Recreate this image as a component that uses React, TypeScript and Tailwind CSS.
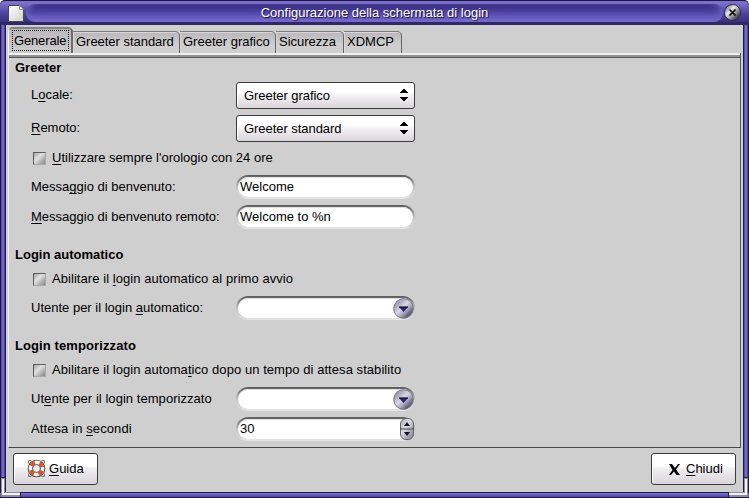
import React from "react";

/* A label whose mnemonic letter is wrapped in underscores: "L_o_cale:" */
function Label({ text, className = "" }: { text: string; className?: string }) {
  const [before, key, after] = text.split("_");
  return (
    <span className={"whitespace-pre " + className}>
      {before}
      {key && <span className="underline decoration-1 underline-offset-2 [text-decoration-skip-ink:none]">{key}</span>}
      {after}
    </span>
  );
}

function Tab({ text, width, tracking = "" }: { text: string; width: string; tracking?: string }) {
  return (
    <div
      className={
        "flex h-[22px] rounded-tr-[5px] border-t border-r border-[#7b7b7b] border-r-[#636363] bg-linear-to-b from-[#b9b7b9] to-[#cfcfcf] to-60% pt-[2px] pl-[3px] shadow-[inset_1px_1px_0_#d9d7d9] " +
        width
      }
    >
      <Label text={text} className={tracking} />
    </div>
  );
}

function Heading({ text, className = "" }: { text: string; className?: string }) {
  return (
    <h2 className={"flex h-5 items-center pl-[6px] font-bold " + className}>
      <Label text={text} />
    </h2>
  );
}

function Row({ label, tracking = "", height = "h-[30px]", children }: { label: string; tracking?: string; height?: string; children: React.ReactNode }) {
  return (
    <div className={"flex items-center pl-[22px] " + height}>
      <div className="w-[205px] shrink-0 pb-px">
        <Label text={label} className={tracking} />
      </div>
      {children}
    </div>
  );
}

function Check({ label, tracking = "" }: { label: string; tracking?: string }) {
  return (
    <div className="flex h-7 items-center gap-[6px] pl-6">
      <span className="mt-px h-[13px] w-[13px] border border-t-[#5c5c5c] border-r-[#a8a8a8] border-b-[#a8a8a8] border-l-[#5c5c5c] bg-linear-to-br from-[#a4a4a4] via-[#e2e2e2] via-40% to-[#858585]" />
      <Label text={label} className={tracking} />
    </div>
  );
}

function Select({ value }: { value: string }) {
  return (
    <div className="flex h-[27px] w-[179px] items-center justify-between rounded-[3px] border border-[#3c3c3c] bg-linear-to-b from-white from-35% via-[#f0eef0] via-55% to-[#d8d6d8] pt-px pr-[6px] pl-[7px] shadow-[inset_1px_1px_0_#fff]">
      <Label text={value} className="tracking-[-0.05px]" />
      <svg width="8" height="12" viewBox="0 0 8 12" shapeRendering="crispEdges" className="-mt-px">
        <path d="M3 0h2v1h1v1h1v1h1v1H0V3h1V2h1V1h1zM0 8h8v1H7v1H6v1H5v1H3v-1H2v-1H1V9H0z" />
      </svg>
    </div>
  );
}

/* Sunken pill: dark upper rim fading to a light lower rim */
function Entry({ value = "", children }: { value?: string; children?: React.ReactNode }) {
  return (
    <div className="h-6 w-[179px] rounded-full bg-linear-to-b from-[#5a5a5a] via-[#c4c4c4] via-50% to-[#e6e6e6] pt-[2px] pr-[2px] pb-[2px] pl-[2px]">
      <div className="flex h-5 items-center justify-between rounded-full bg-white pl-[2px] shadow-[inset_0_1px_0_#e0e0e0]">
        <Label text={value} />
        {children}
      </div>
    </div>
  );
}

function DropKnob() {
  return (
    <svg width="21" height="21" viewBox="0 0 21 21" className="-mr-px shrink-0">
      <defs>
        <linearGradient id="knob" x1="0" y1="0" x2="1" y2="1">
          <stop offset="0" stopColor="#747384" />
          <stop offset=".45" stopColor="#d8d7e6" />
          <stop offset=".62" stopColor="#a9a8bd" />
          <stop offset=".8" stopColor="#5c5b70" />
          <stop offset="1" stopColor="#bbbacb" />
        </linearGradient>
      </defs>
      <circle cx="10.5" cy="10.5" r="9.8" fill="url(#knob)" stroke="#777685" strokeWidth="1" />
      <path d="M6 9h9l-4.5 5z" fill="#292080" />
      <path d="M6 9h9" stroke="#111" strokeWidth="1.2" />
    </svg>
  );
}

function SpinKnob() {
  return (
    <svg width="14" height="22" viewBox="0 0 14 22" className="-mr-px shrink-0">
      <defs>
        <linearGradient id="spin" x1="0" y1="0" x2="1" y2="1">
          <stop offset="0" stopColor="#aaaab4" />
          <stop offset=".4" stopColor="#dcdce4" />
          <stop offset="1" stopColor="#77778a" />
        </linearGradient>
      </defs>
      <rect x=".5" y=".5" width="13" height="21" rx="5.500" fill="url(#spin)" stroke="#666670" />
      <path d="M0 11h14" stroke="#444" />
      <path d="M4 8h6L7 4zM4 14h6l-3 4z" fill="#111" />
    </svg>
  );
}

function LifeRing() {
  return (
    <svg width="19" height="19" viewBox="0 0 19 19" className="-mt-px">
      <path d="M1.500 4.500v-3h3M14.500 1.500h3v3M17.500 14.500v3h-3M4.500 17.500h-3v-3" fill="none" stroke="#77767c" />
      <circle cx="9.500" cy="9.500" r="8.800" fill="#3a373e" />
      <circle cx="9.500" cy="9.500" r="6" fill="none" stroke="#faf7f4" strokeWidth="3.800" />
      <circle cx="9.500" cy="9.500" r="6" fill="none" stroke="#e8501f" strokeWidth="3.800" strokeDasharray="4.712 4.712" strokeDashoffset="-2.356" />
      <circle cx="9.500" cy="9.500" r="3.900" fill="#efedf2" stroke="#4a4448" strokeWidth=".8" />
    </svg>
  );
}

function PushButton({ label, icon, className }: { label: string; icon: React.ReactNode; className: string }) {
  return (
    <button
      className={
        "flex h-8 w-[85px] items-center rounded-[3px] border border-[#3c3c3c] bg-linear-to-b from-white from-40% via-[#efedf0] via-50% to-[#d8d6d8] shadow-[inset_1px_1px_0_#fff] " +
        className
      }
    >
      {icon}
      <Label text={label} />
    </button>
  );
}

export default function App() {
  return (
    <div className="relative flex h-[498px] w-[749px] flex-col overflow-hidden rounded-t-[5px] bg-[#211a48] font-['Liberation_Sans',Arial,sans-serif] text-[13px] leading-[16px] text-black">
      <header className="flex h-[25px] items-center rounded-t-[5px] border-t border-b-[3px] border-t-[#1d1645] border-b-[#302765] bg-linear-to-b from-[#7b70ca] from-10% via-[#4c42a0] via-60% to-[#39307d] pl-2">
        <svg width="16" height="17" viewBox="0 0 16 17" className="mt-[3px] shrink-0">
          <defs>
            <linearGradient id="doc" x1="0" y1="0" x2="1" y2="1">
              <stop offset="0" stopColor="#fff" />
              <stop offset="1" stopColor="#cfcfcb" />
            </linearGradient>
          </defs>
          <path d="M.5.500h11l4 4v12H.5z" fill="url(#doc)" stroke="#48464e" />
          <path d="M11.500.500v4h4" fill="#f8f8f8" stroke="#8b8990" />
        </svg>
        <div className="mt-[3px] ml-[2px] flex h-[18px] w-[697px] shrink-0 items-center justify-center rounded-full bg-linear-to-b from-[#332a78] via-[#4b409f] via-40% to-[#7a6fd2] shadow-[inset_6px_0_6px_-3px_#6b60bd,inset_-6px_0_6px_-3px_#6b60bd]">
          <Label text="Configurazione della schermata di login" className="text-white [text-shadow:1px_1px_1px_#151034]" />
        </div>
        <svg width="17" height="17" viewBox="0 0 17 17" className="mt-[2px] ml-[1px] shrink-0">
          <defs>
            <linearGradient id="close" x1="0" y1="0" x2="1" y2="1">
              <stop offset="0" stopColor="#4a4a50" />
              <stop offset=".38" stopColor="#e8e8ea" />
              <stop offset=".62" stopColor="#8d8d94" />
              <stop offset=".8" stopColor="#44444c" />
              <stop offset="1" stopColor="#aaa" />
            </linearGradient>
          </defs>
          <circle cx="8.500" cy="8.500" r="8" fill="url(#close)" stroke="#302c4c" />
          <path d="M5.500 5.500l6 6M11.500 5.500l-6 6" stroke="#080808" strokeWidth="1.700" />
        </svg>
      </header>

      <div className="flex h-[467px]">
        <div className="w-[6px] shrink-0 border-r border-l border-[#211a48] bg-linear-to-r from-[#5247a5] from-25% via-[#9a8fe8] via-50% to-[#4e429f] to-75%" />
        <main className="flex w-[737px] shrink-0 flex-col bg-[#cfcfcf] px-[2px] pt-[2px]">
          <nav className="flex h-[26px] items-end">
            <div className="h-[26px] w-[65px] rounded-t-[5px] border-t-2 border-r-2 border-l border-t-[#828282] border-r-[#6b6b6b] border-l-[#f4f4f4] bg-linear-to-b from-[#bbb9bb] to-[#cdcdcd] p-[1px]">
              <div className="ml-[2px] flex h-[21px] w-[57px] border border-dotted border-black pt-[2px] pl-px">
                <Label text="Generale" className="tracking-[-0.15px]" />
              </div>
            </div>
            <Tab text="Greeter standard" width="w-[107px]" tracking="tracking-[-0.03px]" />
            <Tab text="Greeter grafico" width="w-24" />
            <Tab text="Sicurezza" width="w-[68px]" />
            <Tab text="XDMCP" width="w-[58px]" />
          </nav>
          <section className="h-[395px] border-r border-b border-l border-r-[#555] border-b-[#484848] border-l-[#eee]">
            <div className="h-[5px] border-t-2 border-b border-t-[#f1eff1] border-b-[#555] bg-[#929292]" />
            <Heading text="Greeter" />
            <Row label="L_o_cale:" height="h-[34px]">
              <Select value="Greeter grafico" />
            </Row>
            <Row label="_R_emoto:" height="h-8">
              <Select value="Greeter standard" />
            </Row>
            <Check label="_U_tilizzare sempre l'orologio con 24 ore" />
            <Row label="Messa_g_gio di benvenuto:">
              <Entry value="Welcome" />
            </Row>
            <Row label="_M_essaggio di benvenuto remoto:">
              <Entry value="Welcome to %n" />
            </Row>
            <Heading text="Login automatico" className="mt-[13px]" />
            <Check label="Abilitare il _l_ogin automatico al primo avvio" tracking="tracking-[0.06px]" />
            <Row label="Utente per il login _a_utomatico:">
              <Entry>
                <DropKnob />
              </Entry>
            </Row>
            <Heading text="Login temporizzato" className="mt-[13px] tracking-[0.1px]" />
            <Check label="Abilitare il login automa_t_ico dopo un tempo di attesa stabilito" tracking="tracking-[0.06px]" />
            <Row label="Ut_e_nte per il login temporizzato" tracking="tracking-[0.05px]">
              <Entry>
                <DropKnob />
              </Entry>
            </Row>
            <Row label="Attesa in _s_econdi" tracking="tracking-[0.1px]">
              <Entry value="30">
                <SpinKnob />
              </Entry>
            </Row>
          </section>
          <footer className="flex justify-between px-[5px] pt-[5px]">
            <PushButton label="_G_uida" className="gap-[3px] pl-[13px]" icon={<LifeRing />} />
            <PushButton
              label="_C_hiudi"
              className="gap-[5px] pl-4"
              icon={
                <svg width="13" height="13" viewBox="0 0 13 13">
                  <path d="M1 1h3l3 4 3-4h2L8 6.500l4 5.500H8.500L6 8.500 3 12H1l3.500-5z" />
                </svg>
              }
            />
          </footer>
        </main>
        <div className="w-[6px] shrink-0 border-r border-l border-[#211a48] bg-linear-to-r from-[#5247a5] from-25% via-[#9a8fe8] via-50% to-[#4e429f] to-75%" />
      </div>
      <div className="h-[6px] border-t border-b border-[#211a48] bg-linear-to-b from-[#8177d8] to-[#4e429f]" />

      {/* resize grips over the frame's lower corners */}
      <svg width="21" height="21" viewBox="0 0 21 21" shapeRendering="crispEdges" className="absolute bottom-0 left-0">
        <path d="M1 1h4v14h16v5H1z" fill="#8e8c9a" />
        <path d="M2 2h2v14h16v2H2z" fill="#f4f2f8" />
        <path d="M0 .5h6M20.500 15v5" stroke="#211a48" />
      </svg>
      <svg width="21" height="21" viewBox="0 0 21 21" shapeRendering="crispEdges" className="absolute right-0 bottom-0">
        <path d="M20 1h-4v14H0v5h20z" fill="#8e8c9a" />
        <path d="M19 2h-2v14H1v2h18z" fill="#f4f2f8" />
        <path d="M21 .5h-6M.5 15v5" stroke="#211a48" />
      </svg>
    </div>
  );
}
